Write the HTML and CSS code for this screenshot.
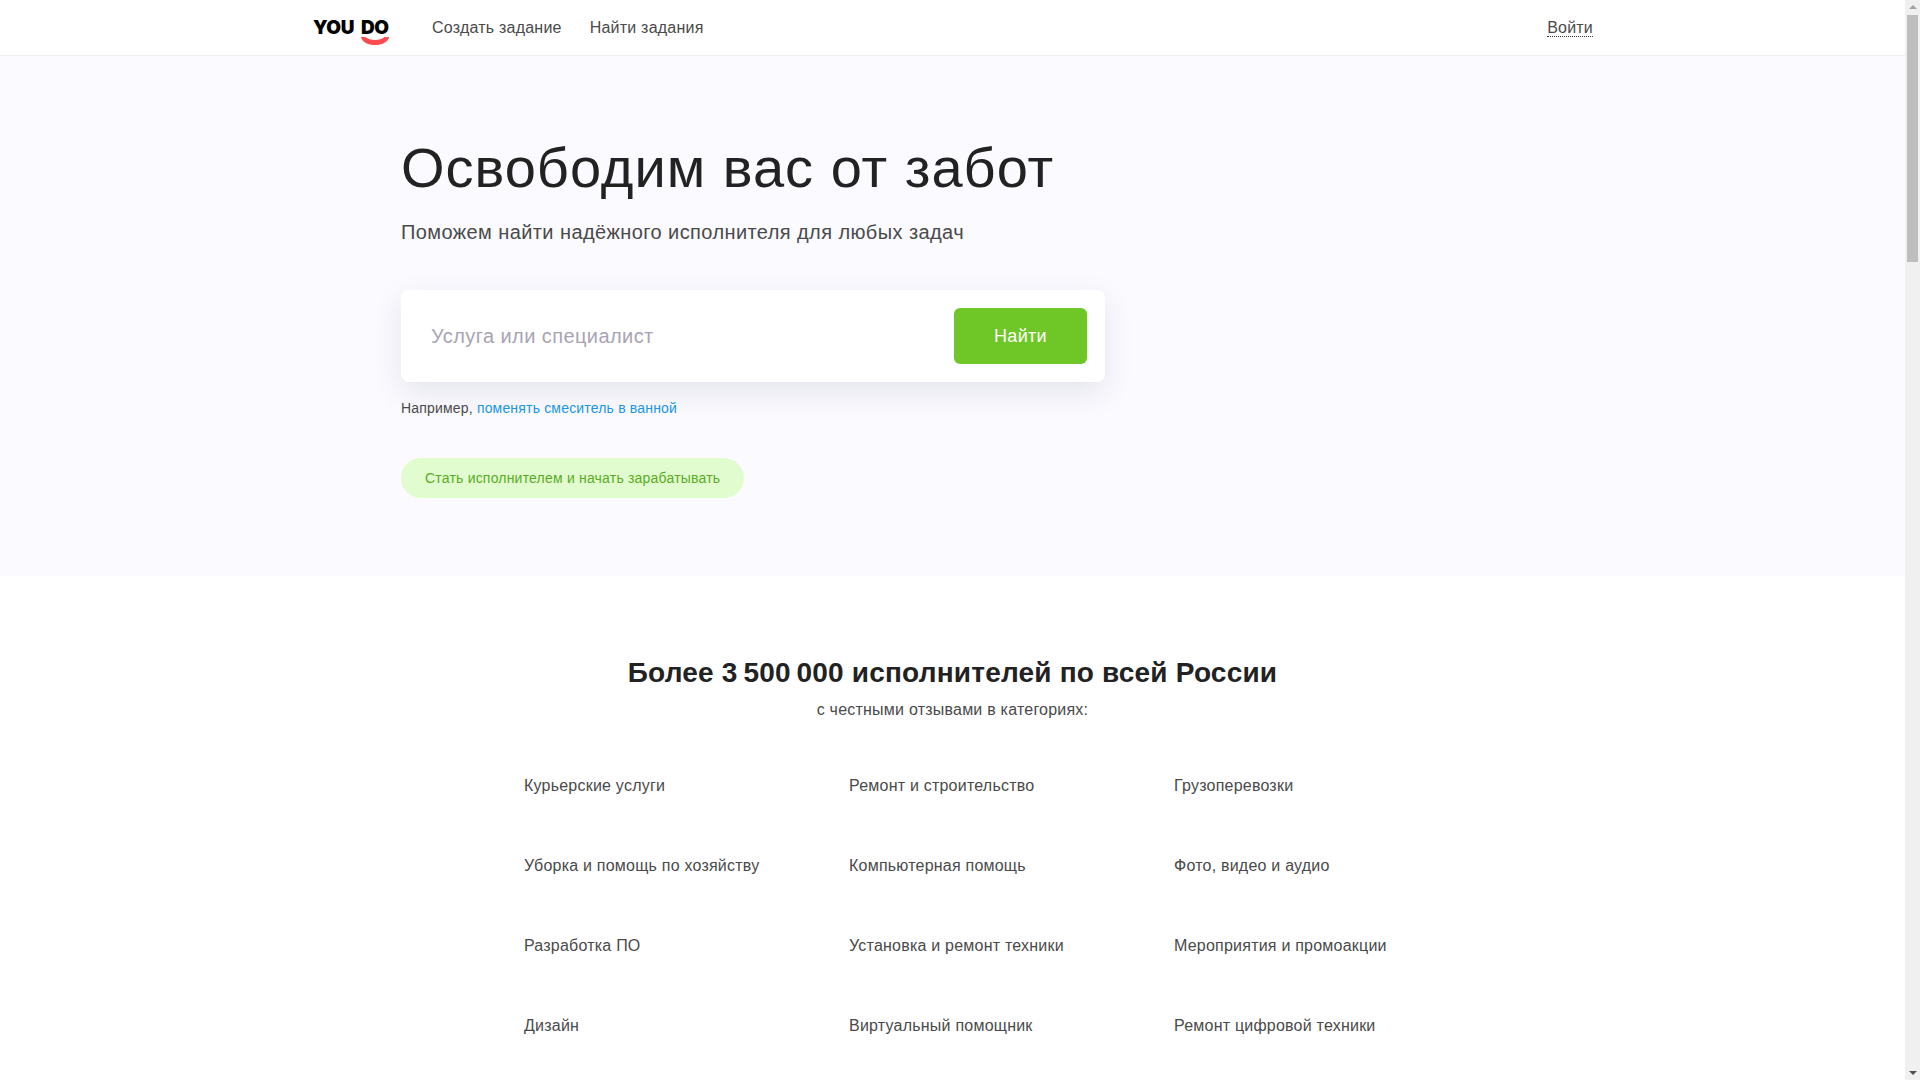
FILE: index.html
```html
<!doctype html>
<html lang="ru">
  <head>
    <meta charset="UTF-8" />
    <meta name="viewport" content="width=device-width, initial-scale=1.0" />
    <title>YouDo</title>
    <link rel="stylesheet" href="styles.css">
  </head>
  <body>
    <div class="page">
      <header class="header">
        <a class="logo" href="#">
          <span class="logo-you">YOU</span>
          <span class="logo-do">DO
            <svg class="logo-smile" width="28" height="8" viewBox="0 0 28 8"><path d="M.5 0h3.700C7 2 10 3 14 3s7-1 9.800-3h3.700c.4 0 .6.300.500.700C26.400 5.200 21 8 14 8S1.600 5.200 0 .7C-.1.300.1 0 .5 0z" fill="#ff4d4f"/></svg>
          </span>
        </a>
        <nav class="nav">
          <a href="#">Создать задание</a>
          <a href="#">Найти задания</a>
        </nav>
        <a class="login" href="#">Войти</a>
      </header>

      <section class="hero">
        <h1>Освободим вас от забот</h1>
        <p class="hero-sub">Поможем найти надёжного исполнителя для любых задач</p>
        <form class="search">
          <input class="search-input" type="text" placeholder="Услуга или специалист">
          <button class="search-btn" type="button">Найти</button>
        </form>
        <p class="example">Например, <a href="#">поменять смеситель в ванной</a></p>
        <a class="become" href="#">Стать исполнителем и начать зарабатывать</a>
      </section>

      <section class="categories">
        <h2>Более 3&#8201;500&#8201;000 исполнителей по всей России</h2>
        <p class="categories-sub">с честными отзывами в категориях:</p>
        <div class="cat-grid">
          <a href="#">Курьерские услуги</a>
          <a href="#">Ремонт и строительство</a>
          <a href="#">Грузоперевозки</a>
          <a href="#">Уборка и помощь по хозяйству</a>
          <a href="#">Компьютерная помощь</a>
          <a href="#">Фото, видео и аудио</a>
          <a href="#">Разработка ПО</a>
          <a href="#">Установка и ремонт техники</a>
          <a href="#">Мероприятия и промоакции</a>
          <a href="#">Дизайн</a>
          <a href="#">Виртуальный помощник</a>
          <a href="#">Ремонт цифровой техники</a>
        </div>
      </section>
    </div>

    <div class="scrollbar" aria-hidden="true">
      <span class="arrow-up"></span>
      <span class="thumb"></span>
      <span class="arrow-down"></span>
    </div>
  </body>
</html>
```

FILE: styles.css
```css
html,
body {
  height: 100%;
}
body {
  margin: 0;
  display: flex;
  overflow: hidden;
  background: #fff;
  font-family: "Liberation Sans", Arial, sans-serif;
  font-size: 16px;
  letter-spacing: 0.22px;
  color: #4a4a4a;
}
a {
  color: inherit;
  text-decoration: none;
}
.page {
  flex: 1;
  min-width: 0;
  height: 100%;
  overflow: hidden;
}

/* header */
.header {
  display: flex;
  align-items: center;
  height: 55px;
  padding: 0 312px 0 313px;
  border-bottom: 1px solid #eeeeee;
  background: #fff;
}
.logo {
  display: flex;
  gap: 7px;
  width: 119px;
  font-family: Inter, sans-serif;
  font-size: 19px;
  font-weight: 900;
  line-height: 14px;
  letter-spacing: -0.4px;
  color: #000;
}
.logo-you,
.logo-do {
  display: block;
  position: relative;
}
.logo-smile {
  position: absolute;
  left: 0;
  top: 16px;
}
.nav {
  display: flex;
  gap: 28px;
  flex: 1;
}
.login {
  border-bottom: 1px dotted #333;
  line-height: 17px;
}

/* hero */
.hero {
  height: 520px;
  box-sizing: border-box;
  padding: 80px 0 0 401px;
  background: #fafaff;
}
.hero h1 {
  margin: 0;
  font-size: 56px;
  font-weight: 400;
  line-height: 64px;
  letter-spacing: 1px;
  color: #222;
}
.hero-sub {
  margin: 18px 0 0;
  font-size: 20px;
  line-height: 28px;
  letter-spacing: 0.41px;
}
.search {
  display: flex;
  align-items: center;
  justify-content: space-between;
  width: 704px;
  height: 92px;
  box-sizing: border-box;
  margin-top: 44px;
  padding: 0 18px 0 30px;
  border-radius: 8px;
  background: #fff;
  box-shadow: 0 10px 30px rgba(40, 40, 70, 0.1);
}
.search-input {
  width: 480px;
  padding: 0;
  border: 0;
  outline: 0;
  font: inherit;
  font-size: 20px;
  letter-spacing: 0.42px;
}
.search-input::placeholder {
  color: #a8a4b4;
  opacity: 1;
}
.search-btn {
  width: 133px;
  height: 56px;
  border: 0;
  border-radius: 6px;
  background: #6ec726;
  color: #fff;
  font: inherit;
  font-size: 18px;
  letter-spacing: 0.3px;
}
.example {
  margin: 17px 0 0;
  font-size: 14px;
  line-height: 18px;
  letter-spacing: 0.18px;
}
.example a {
  color: #1a96e8;
}
.become {
  display: inline-block;
  margin-top: 41px;
  padding: 0 24px;
  border-radius: 20px;
  background: #e1fdcf;
  color: #5aab1e;
  font-size: 14px;
  line-height: 40px;
  letter-spacing: 0.2px;
}

/* categories */
.categories {
  padding-top: 79px;
  text-align: center;
}
.categories h2 {
  margin: 0;
  font-size: 28px;
  line-height: 36px;
  letter-spacing: 0.2px;
  color: #222;
}
.categories-sub {
  margin: 9px 0 0;
  line-height: 20px;
}
.cat-grid {
  display: grid;
  grid-template-columns: repeat(3, 325px);
  grid-auto-rows: 80px;
  margin: 26px 0 0 524px;
  text-align: left;
  line-height: 80px;
}

/* scrollbar, same as the browser draws it */
.scrollbar {
  display: flex;
  flex-direction: column;
  align-items: center;
  flex: 0 0 15px;
  height: 100%;
  background: #f0f0f0;
}
.arrow-up,
.arrow-down {
  width: 0;
  height: 0;
  border-left: 4px solid transparent;
  border-right: 4px solid transparent;
}
.arrow-up {
  margin-top: 5px;
  border-bottom: 4px solid #a3a3a3;
}
.thumb {
  width: 11px;
  height: 247px;
  margin-top: 6px;
  background: #bebebe;
}
.arrow-down {
  margin-top: auto;
  margin-bottom: 5px;
  border-top: 4px solid #505050;
}
```
